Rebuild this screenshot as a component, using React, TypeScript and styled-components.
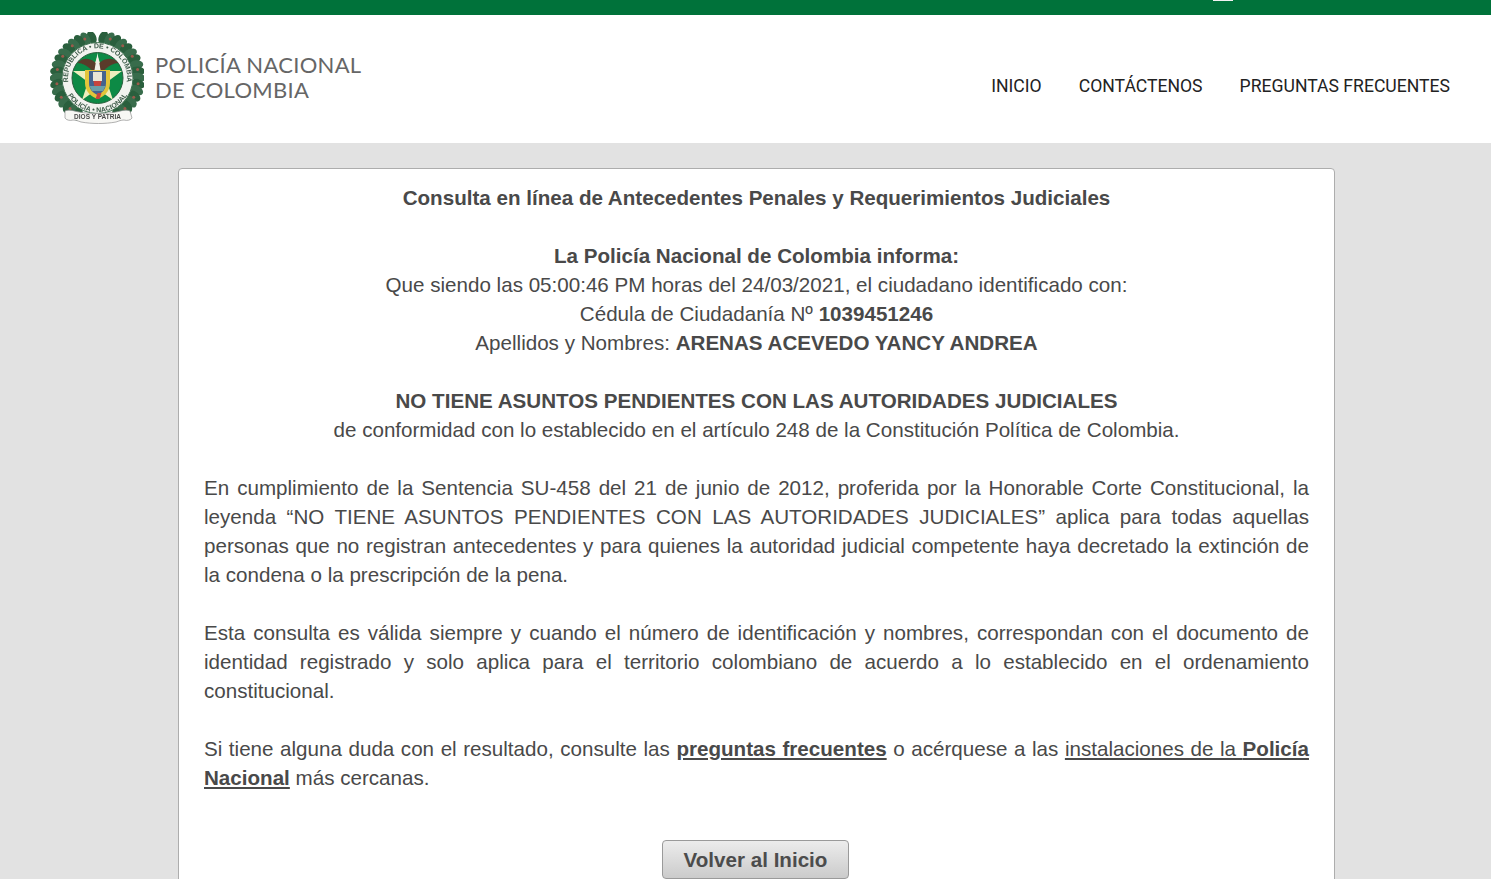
import styled, { createGlobalStyle } from "styled-components";

const GlobalStyle = createGlobalStyle`
  html, body {
    margin: 0;
    padding: 0;
    height: 879px;
    overflow: hidden;
    background: #e2e2e2;
  }
`;

const Page = styled.div`
  height: 879px;
  overflow: hidden;
  background: #e2e2e2;
  font-family: "Liberation Sans", Arial, sans-serif;
`;

const TopBar = styled.div`
  position: relative;
  height: 15px;
  background: #00723a;
`;

const TopBarMark = styled.span`
  position: absolute;
  left: 1213px;
  top: 0;
  width: 20px;
  height: 1px;
  background: #f2f2f2;
`;

const Header = styled.header`
  height: 128px;
  padding: 0 41px 0 50px;
  display: flex;
  align-items: center;
  justify-content: space-between;
  background: #fff;
`;

const Brand = styled.div`
  display: flex;
  align-items: center;
  gap: 11px;
`;

const BrandName = styled.div`
  font-family: Lato, "Open Sans", sans-serif;
  font-size: 22px;
  letter-spacing: 0.3px;
  line-height: 25px;
  color: #666;
  margin-top: -4px;
`;

const Nav = styled.nav`
  display: flex;
  gap: 37px;
  margin-top: 13px;
`;

const NavLink = styled.a`
  font-family: Roboto, sans-serif;
  font-size: 17.6px;
  line-height: 24px;
  color: #222;
  text-decoration: none;
`;

const Card = styled.main`
  box-sizing: border-box;
  width: 1157px;
  margin: 25px 0 0 178px;
  padding: 14px 25px 60px;
  background: #fff;
  border: 1px solid #adadad;
  border-radius: 4px;
  color: #494949;
  font-size: 20.6px;
  line-height: 29px;
`;

const Centered = styled.div`
  text-align: center;
  margin-bottom: 29px;
`;

const Justified = styled.p`
  margin: 0 0 29px;
  text-align: justify;
`;

const Under = styled.span`
  text-decoration: underline;
`;

const Actions = styled.div`
  display: flex;
  justify-content: center;
  margin-top: 48px;
`;

const BackButton = styled.button`
  box-sizing: border-box;
  width: 187px;
  height: 39px;
  margin-left: -2px;
  padding: 0;
  border: 1px solid #9a9a9a;
  border-radius: 4px;
  background: linear-gradient(#ececec, #cbcbcb);
  color: #4c4c4c;
  font-family: "Liberation Sans", Arial, sans-serif;
  font-size: 20.6px;
  font-weight: bold;
`;

const leafAngles = [-82, -73, -64, -55, -46, -37, -28, -19, -10, -1, 8, 17, 26, 35, 44, 53, 62];
const berryAngles = [-72, -52, -32, -12, 8, 28, 48];

function Wreath({ side }: { side: 1 | -1 }) {
  return (
    <g>
      {leafAngles.map((a, i) => {
        const rad = (a * Math.PI) / 180;
        const x = 47.5 + side * 41 * Math.cos(rad);
        const y = 46 + 41 * Math.sin(rad);
        const tilt = side * (a + 105);
        return (
          <ellipse
            key={a}
            cx={x}
            cy={y}
            rx={4.4}
            ry={7}
            fill={i % 2 ? "#386c4c" : "#2a5f3c"}
            transform={`rotate(${tilt} ${x} ${y})`}
          />
        );
      })}
      {berryAngles.map((a) => {
        const rad = (a * Math.PI) / 180;
        return (
          <circle
            key={a}
            cx={47.5 + side * 41 * Math.cos(rad)}
            cy={46 + 41 * Math.sin(rad)}
            r={1.5}
            fill="#9c5a4c"
          />
        );
      })}
    </g>
  );
}

function Crest() {
  return (
    <svg width="94" height="94" viewBox="0 0 94 94" aria-label="Escudo">
      <defs>
        <filter id="soft" x="-5%" y="-5%" width="110%" height="110%">
          <feGaussianBlur stdDeviation="0.45" />
        </filter>
        <path id="ringTop" d="M19.500 55a29.500 29.500 0 1 1 56 0" />
        <path id="ringBottom" d="M14 54a34.500 34.500 0 0 0 67 0" />
      </defs>
      <g filter="url(#soft)">
        <Wreath side={1} />
        <Wreath side={-1} />
        <circle cx="47.500" cy="46" r="35.500" fill="#f2f3ef" stroke="#3f7050" />
        <circle cx="47.500" cy="46" r="25.500" fill="#0d8a45" stroke="#2a5f3c" />
        <text fontFamily="Liberation Sans" fontSize="7" fontWeight="bold" fill="#3c5a48">
          <textPath href="#ringTop" startOffset="50%" textAnchor="middle">
            REPÚBLICA • DE • COLOMBIA
          </textPath>
        </text>
        <text fontFamily="Liberation Sans" fontSize="7" fontWeight="bold" fill="#3c5a48">
          <textPath href="#ringBottom" startOffset="50%" textAnchor="middle">
            POLICÍA • NACIONAL
          </textPath>
        </text>
        <polygon
          points="47.500,24 53,39 72,39 57,50 63,68 47.500,57 32,68 38,50 23,39 42,39"
          fill="#eeeebd"
        />
        <path d="M35 38h25v13c0 9-7 14-12.500 16-5.500-2-12.500-7-12.500-16z" fill="#e2c53a" />
        <path d="M39 39h17v12c0 7-4.500 10-8.500 12-4-2-8.500-5-8.500-12z" fill="#44648f" />
        <path d="M43 40h9v9h-9z" fill="#e9e5d5" />
        <path d="M43.500 49h8l-1 6h-6z" fill="#c8453d" />
        <path d="M39.500 54h16l-2.500 5H42z" fill="#6aa0a8" />
        <path d="M47.500 61h4l-2 6h-4z" fill="#c8453d" />
        <path d="M47.500 33c-6-8-15-8-20-2 5 0 10 3 14 7h13c4-4 9-7 14-7-5-6-15-6-21 2z" fill="#5a3a2c" />
        <path d="M44.500 38l3-17 3 17z" fill="#f0eee6" />
        <path
          d="M15 79c4-2 9 0 14 1 12 2 25 2 37 0 5-1 10-3 14-1l2 7c-1 2-5 3-8 2-3 0-5 1-8 2-11 2-24 2-35 0-3-1-5-2-8-2-3 1-7 0-8-2z"
          fill="#f7f7f4"
          stroke="#8f8f8f"
          strokeWidth="0.700"
        />
        <text
          x="47.500"
          y="87"
          textAnchor="middle"
          fontFamily="Liberation Sans"
          fontSize="6.500"
          fontWeight="bold"
          fill="#4a4a4a"
        >
          DIOS Y PATRIA
        </text>
      </g>
    </svg>
  );
}

export default function App() {
  return (
    <Page>
      <GlobalStyle />
      <TopBar>
        <TopBarMark />
      </TopBar>
      <Header>
        <Brand>
          <Crest />
          <BrandName>
            POLICÍA NACIONAL
            <br />
            DE COLOMBIA
          </BrandName>
        </Brand>
        <Nav>
          <NavLink href="#">INICIO</NavLink>
          <NavLink href="#">CONTÁCTENOS</NavLink>
          <NavLink href="#">PREGUNTAS FRECUENTES</NavLink>
        </Nav>
      </Header>
      <Card>
        <Centered>
          <b>Consulta en línea de Antecedentes Penales y Requerimientos Judiciales</b>
        </Centered>
        <Centered>
          <b>La Policía Nacional de Colombia informa:</b>
          <br />
          Que siendo las 05:00:46 PM horas del 24/03/2021, el ciudadano identificado con:
          <br />
          Cédula de Ciudadanía Nº <b>1039451246</b>
          <br />
          Apellidos y Nombres: <b>ARENAS ACEVEDO YANCY ANDREA</b>
        </Centered>
        <Centered>
          <b>NO TIENE ASUNTOS PENDIENTES CON LAS AUTORIDADES JUDICIALES</b>
          <br />
          de conformidad con lo establecido en el artículo 248 de la Constitución Política de Colombia.
        </Centered>
        <Justified>
          En cumplimiento de la Sentencia SU-458 del 21 de junio de 2012, proferida por la Honorable
          Corte Constitucional, la leyenda “NO TIENE ASUNTOS PENDIENTES CON LAS AUTORIDADES
          JUDICIALES” aplica para todas aquellas personas que no registran antecedentes y para quienes
          la autoridad judicial competente haya decretado la extinción de la condena o la prescripción
          de la pena.
        </Justified>
        <Justified>
          Esta consulta es válida siempre y cuando el número de identificación y nombres, correspondan
          con el documento de identidad registrado y solo aplica para el territorio colombiano de
          acuerdo a lo establecido en el ordenamiento constitucional.
        </Justified>
        <Justified>
          Si tiene alguna duda con el resultado, consulte las{" "}
          <Under>
            <b>preguntas frecuentes</b>
          </Under>{" "}
          o acérquese a las{" "}
          <Under>
            instalaciones de la <b>Policía Nacional</b>
          </Under>{" "}
          más cercanas.
        </Justified>
        <Actions>
          <BackButton type="button">Volver al Inicio</BackButton>
        </Actions>
      </Card>
    </Page>
  );
}
